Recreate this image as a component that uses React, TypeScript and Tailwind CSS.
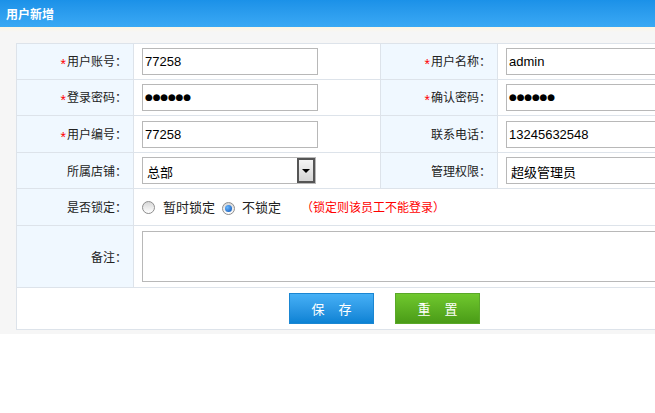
import React from 'react';

const cjk = { fontFamily: '"SimSun", "Noto Sans CJK SC", "DejaVu Sans", sans-serif' };
const latin = { fontFamily: '"Liberation Sans", Arial, sans-serif' };

const Label: React.FC<{ text: string; required?: boolean }> = ({ text, required }) => (
  <td className="w-[116px] bg-[#f0f8ff] border border-[#dde3ea] text-right pr-[6px] text-[12px] text-[#222]" style={cjk}>
    {required && <span className="text-[#ff0000] text-[14px] relative top-[3px] mr-[1px]" style={latin}>*</span>}
    {text}：
  </td>
);

const Field: React.FC<{ value: string; wide?: boolean }> = ({ value, wide }) => (
  <input
    readOnly
    value={value}
    className={`${wide ? 'w-[200px]' : 'w-[176px]'} h-[27px] border border-[#b8b8b8] bg-white px-[2px] text-[13px] text-black outline-none`}
    style={latin}
  />
);

const Dots: React.FC<{ wide?: boolean }> = ({ wide }) => (
  <div className={`${wide ? 'w-[200px]' : 'w-[176px]'} h-[27px] border border-[#b8b8b8] bg-white pl-[2px] flex items-center text-[9px] tracking-[-0.2px] text-black`} style={{ fontFamily: '"DejaVu Sans", sans-serif' }}>
    ●●●●●●
  </div>
);

const Radio: React.FC<{ checked?: boolean }> = ({ checked }) => (
  <span className="inline-flex w-[13px] h-[13px] rounded-full border border-[#8e8e8e] bg-gradient-to-b from-[#d8d8d8] to-[#ffffff] items-center justify-center">
    {checked && <span className="w-[7px] h-[7px] rounded-full bg-[radial-gradient(circle_at_35%_35%,#6ab8ff,#0a4fb0)]" />}
  </span>
);

export default function App() {
  return (
    <div className="w-[655px] h-[413px] overflow-hidden bg-white">
      <div className="h-[27px] bg-gradient-to-b from-[#1b91e8] to-[#3aa9f4] flex items-center pl-[6px]">
        <span className="text-white text-[12px] font-bold" style={cjk}>用户新增</span>
      </div>
      <div className="bg-[#f6f6f6] pt-[16px] pb-[4px] pl-[16px] bg-[linear-gradient(to_bottom,#fdf6e4_0px,#f6f6f6_5px)]">
        <table className="border-collapse table-fixed w-[760px] bg-white border border-[#dde3ea]">
          <colgroup>
            <col className="w-[117px]" />
            <col className="w-[247px]" />
            <col className="w-[117px]" />
            <col />
          </colgroup>
          <tbody>
            <tr className="h-[36px]">
              <Label text="用户账号" required />
              <td className="border border-[#dde3ea] pl-[8px]"><Field value="77258" /></td>
              <Label text="用户名称" required />
              <td className="border border-[#dde3ea] pl-[8px]"><Field value="admin" wide /></td>
            </tr>
            <tr className="h-[36px]">
              <Label text="登录密码" required />
              <td className="border border-[#dde3ea] pl-[8px]"><Dots /></td>
              <Label text="确认密码" required />
              <td className="border border-[#dde3ea] pl-[8px]"><Dots wide /></td>
            </tr>
            <tr className="h-[37px]">
              <Label text="用户编号" required />
              <td className="border border-[#dde3ea] pl-[8px]"><Field value="77258" /></td>
              <Label text="联系电话" />
              <td className="border border-[#dde3ea] pl-[8px]"><Field value="13245632548" wide /></td>
            </tr>
            <tr className="h-[36px]">
              <Label text="所属店铺" />
              <td className="border border-[#dde3ea] pl-[8px]">
                <div className="w-[174px] h-[27px] border border-[#b8b8b8] bg-white flex items-center justify-between">
                  <span className="pl-[4px] pt-[2px] text-[13px] text-black" style={cjk}>总部</span>
                  <span className="w-[18px] h-[25px] border-2 border-[#555] bg-gradient-to-b from-[#f4f4f4] to-[#d4d4d4] flex items-center justify-center">
                    <span className="w-0 h-0 border-l-[4px] border-r-[4px] border-t-[4px] border-l-transparent border-r-transparent border-t-black" />
                  </span>
                </div>
              </td>
              <Label text="管理权限" />
              <td className="border border-[#dde3ea] pl-[8px]">
                <div className="w-[200px] h-[27px] border border-[#b8b8b8] bg-white flex items-center">
                  <span className="pl-[4px] pt-[2px] text-[13px] text-black" style={cjk}>超级管理员</span>
                </div>
              </td>
            </tr>
            <tr className="h-[37px]">
              <Label text="是否锁定" />
              <td colSpan={3} className="border border-[#dde3ea] pl-[8px]">
                <div className="flex items-center text-[13px] text-[#222]" style={cjk}>
                  <Radio />
                  <span className="ml-[8px]">暂时锁定</span>
                  <span className="ml-[7px]"><Radio checked /></span>
                  <span className="ml-[7px]">不锁定</span>
                  <span className="ml-[20px] text-[12px] text-[#ff0000]">（锁定则该员工不能登录）</span>
                </div>
              </td>
            </tr>
            <tr className="h-[62px]">
              <Label text="备注" />
              <td colSpan={3} className="border border-[#dde3ea] pl-[8px]">
                <div className="w-[560px] h-[51px] border border-[#b8b8b8] bg-white" />
              </td>
            </tr>
            <tr className="h-[42px]">
              <td colSpan={4} className="border border-[#dde3ea]">
                <div className="flex items-center w-[639px] pl-[272px] gap-[21px]">
                  <button className="w-[85px] h-[31px] border border-[#1a86d2] bg-gradient-to-b from-[#45b0f6] to-[#0a82d4] text-white text-[13px] tracking-[14px] pl-[14px]" style={cjk}>保存</button>
                  <button className="w-[85px] h-[31px] border border-[#5aa828] bg-gradient-to-b from-[#70c82e] to-[#4a9c17] text-white text-[13px] tracking-[14px] pl-[14px]" style={cjk}>重置</button>
                </div>
              </td>
            </tr>
          </tbody>
        </table>
      </div>
    </div>
  );
}
